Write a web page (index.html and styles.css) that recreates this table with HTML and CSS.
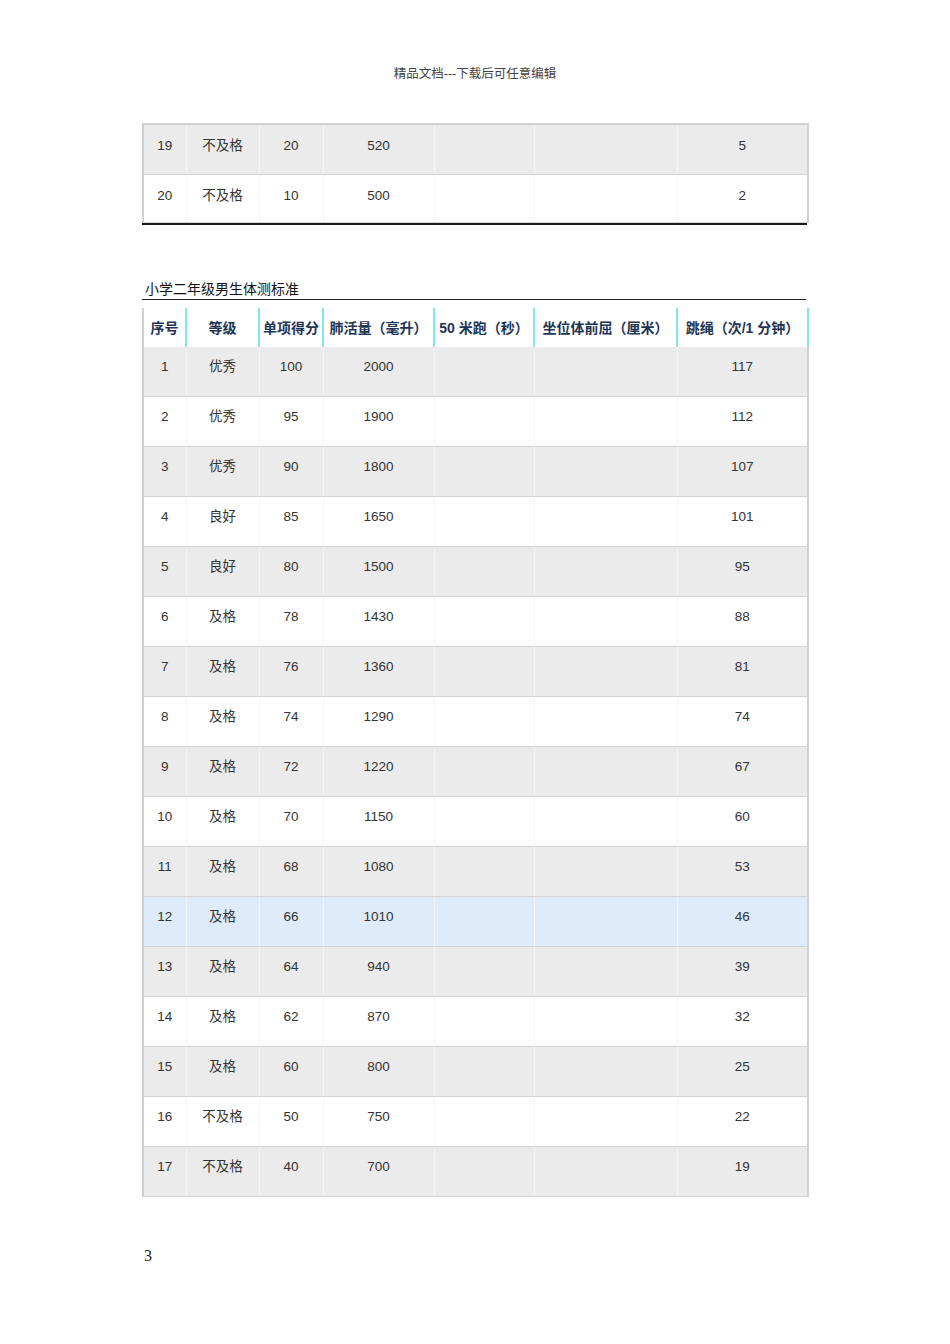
FILE: index.html
```html
<!DOCTYPE html>
<html lang="zh">
<head>
<meta charset="utf-8">
<title>小学二年级男生体测标准</title>
<link rel="stylesheet" href="styles.css">
</head>
<body>
<div class="page">
  <div class="doc-head">精品文档---下载后可任意编辑</div>

  <div class="prev-wrap">
    <table class="grid prev">
      <colgroup>
        <col class="c1"><col class="c2"><col class="c3"><col class="c4"><col class="c5"><col class="c6"><col class="c7">
      </colgroup>
      <tbody>
        <tr class="odd"><td>19</td><td>不及格</td><td>20</td><td>520</td><td></td><td></td><td>5</td></tr>
        <tr class="even last"><td>20</td><td>不及格</td><td>10</td><td>500</td><td></td><td></td><td>2</td></tr>
      </tbody>
    </table>
  </div>

  <div class="title">小学二年级男生体测标准</div>

  <table class="grid main">
    <colgroup>
      <col class="c1"><col class="c2"><col class="c3"><col class="c4"><col class="c5"><col class="c6"><col class="c7">
    </colgroup>
    <thead>
      <tr><th>序号</th><th>等级</th><th>单项得分</th><th>肺活量（毫升）</th><th>50 米跑（秒）</th><th>坐位体前屈（厘米）</th><th>跳绳（次/1 分钟）</th></tr>
    </thead>
    <tbody>
      <tr class="odd"><td>1</td><td>优秀</td><td>100</td><td>2000</td><td></td><td></td><td>117</td></tr>
      <tr class="even"><td>2</td><td>优秀</td><td>95</td><td>1900</td><td></td><td></td><td>112</td></tr>
      <tr class="odd"><td>3</td><td>优秀</td><td>90</td><td>1800</td><td></td><td></td><td>107</td></tr>
      <tr class="even"><td>4</td><td>良好</td><td>85</td><td>1650</td><td></td><td></td><td>101</td></tr>
      <tr class="odd"><td>5</td><td>良好</td><td>80</td><td>1500</td><td></td><td></td><td>95</td></tr>
      <tr class="even"><td>6</td><td>及格</td><td>78</td><td>1430</td><td></td><td></td><td>88</td></tr>
      <tr class="odd"><td>7</td><td>及格</td><td>76</td><td>1360</td><td></td><td></td><td>81</td></tr>
      <tr class="even"><td>8</td><td>及格</td><td>74</td><td>1290</td><td></td><td></td><td>74</td></tr>
      <tr class="odd"><td>9</td><td>及格</td><td>72</td><td>1220</td><td></td><td></td><td>67</td></tr>
      <tr class="even"><td>10</td><td>及格</td><td>70</td><td>1150</td><td></td><td></td><td>60</td></tr>
      <tr class="odd"><td>11</td><td>及格</td><td>68</td><td>1080</td><td></td><td></td><td>53</td></tr>
      <tr class="hl"><td>12</td><td>及格</td><td>66</td><td>1010</td><td></td><td></td><td>46</td></tr>
      <tr class="odd"><td>13</td><td>及格</td><td>64</td><td>940</td><td></td><td></td><td>39</td></tr>
      <tr class="even"><td>14</td><td>及格</td><td>62</td><td>870</td><td></td><td></td><td>32</td></tr>
      <tr class="odd"><td>15</td><td>及格</td><td>60</td><td>800</td><td></td><td></td><td>25</td></tr>
      <tr class="even"><td>16</td><td>不及格</td><td>50</td><td>750</td><td></td><td></td><td>22</td></tr>
      <tr class="odd"><td>17</td><td>不及格</td><td>40</td><td>700</td><td></td><td></td><td>19</td></tr>
    </tbody>
  </table>

  <div class="page-num">3</div>
</div>
</body>
</html>
```

FILE: styles.css
```css
html, body {
  margin: 0;
  padding: 0;
  background: #ffffff;
}

.page {
  width: 950px;
  min-height: 1344px;
  padding-top: 65px;
  box-sizing: border-box;
  font-family: "Liberation Sans", "Noto Sans CJK SC", sans-serif;
  color: #333333;
}

.doc-head {
  text-align: center;
  font-size: 12.5px;
  line-height: 18px;
  color: #444444;
}

.prev-wrap {
  width: 665px;
  margin: 40px 0 0 142px;
  border-bottom: 2px solid #1a1a1a;
}

.grid {
  width: 665px;
  border-collapse: collapse;
  table-layout: fixed;
  border-left: 2px solid #d0d0d0;
  border-right: 2px solid #d0d0d0;
}

.prev {
  border-top: 2px solid #d0d0d0;
}

.main {
  margin: 8px 0 0 142px;
  border-bottom: 1px solid #d0d0d0;
}

.c1 { width: 43px; }
.c2 { width: 73px; }
.c3 { width: 64px; }
.c4 { width: 111px; }
.c5 { width: 100px; }
.c6 { width: 143px; }
.c7 { width: 131px; }

.grid td {
  height: 50px;
  padding: 12px 0 0 0;
  box-sizing: border-box;
  vertical-align: top;
  text-align: center;
  font-size: 13.5px;
  line-height: 16px;
  color: #333333;
  border-right: 1px solid #f5f5f5;
  border-bottom: 1px solid #d4d4d4;
}

.grid td:last-child {
  border-right: none;
}

.prev td {
  padding-top: 13px;
}

.prev tr.last td {
  border-bottom: 1px solid #d4d4d4;
  height: 48px;
}

tr.odd td { background: #ebebeb; }
tr.even td { background: #ffffff; }
tr.hl td { background: #deebfb; }

.title {
  width: 664px;
  margin: 54px 0 0 142px;
  padding-left: 3px;
  box-sizing: border-box;
  font-size: 14px;
  line-height: 20px;
  color: #111111;
  border-bottom: 1px solid #222222;
}

.main thead th {
  height: 39px;
  padding: 0;
  background: #ffffff;
  font-size: 14px;
  font-weight: bold;
  color: #1e3556;
  text-align: center;
  white-space: nowrap;
  border-right: 2px solid #7fe8ee;
}

.page-num {
  margin: 49px 0 0 144px;
  font-family: "Liberation Serif", serif;
  font-size: 16px;
  line-height: 20px;
  color: #222222;
}
```
